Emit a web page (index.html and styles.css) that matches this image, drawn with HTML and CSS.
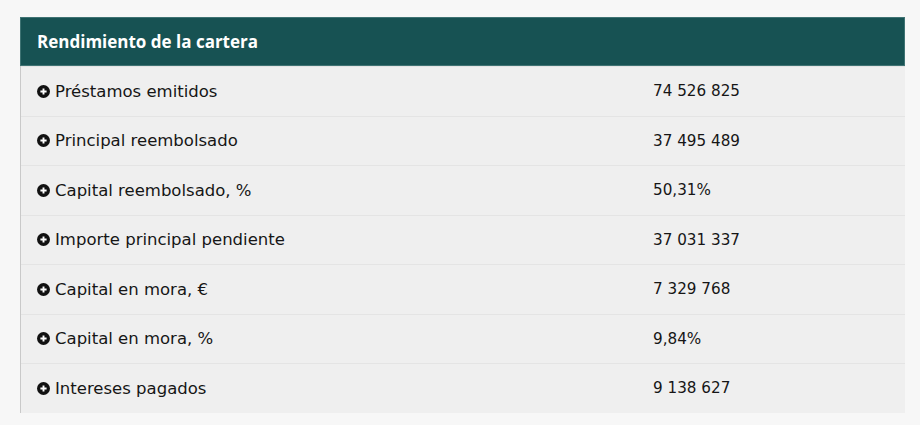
FILE: index.html
```html
<!DOCTYPE html>
<html lang="es">
<head>
<meta charset="utf-8">
<link rel="stylesheet" href="styles.css">
</head>
<body>
<div class="table">
  <div class="head">Rendimiento de la cartera</div>
  <div class="row"><div class="label"><span class="ic"><svg viewBox="0 0 13 13" width="13" height="13"><circle cx="6.5" cy="6.5" r="6.5" fill="#111"/><path d="M6.5 3.4v6.2M3.4 6.5h6.2" stroke="#fff" stroke-width="1.9"/></svg></span>Préstamos emitidos</div><div class="val">74 526 825</div></div>
  <div class="row"><div class="label"><span class="ic"><svg viewBox="0 0 13 13" width="13" height="13"><circle cx="6.5" cy="6.5" r="6.5" fill="#111"/><path d="M6.5 3.4v6.2M3.4 6.5h6.2" stroke="#fff" stroke-width="1.9"/></svg></span>Principal reembolsado</div><div class="val">37 495 489</div></div>
  <div class="row"><div class="label"><span class="ic"><svg viewBox="0 0 13 13" width="13" height="13"><circle cx="6.5" cy="6.5" r="6.5" fill="#111"/><path d="M6.5 3.4v6.2M3.4 6.5h6.2" stroke="#fff" stroke-width="1.9"/></svg></span>Capital reembolsado, %</div><div class="val">50,31%</div></div>
  <div class="row"><div class="label"><span class="ic"><svg viewBox="0 0 13 13" width="13" height="13"><circle cx="6.5" cy="6.5" r="6.5" fill="#111"/><path d="M6.5 3.4v6.2M3.4 6.5h6.2" stroke="#fff" stroke-width="1.9"/></svg></span>Importe principal pendiente</div><div class="val">37 031 337</div></div>
  <div class="row"><div class="label"><span class="ic"><svg viewBox="0 0 13 13" width="13" height="13"><circle cx="6.5" cy="6.5" r="6.5" fill="#111"/><path d="M6.5 3.4v6.2M3.4 6.5h6.2" stroke="#fff" stroke-width="1.9"/></svg></span>Capital en mora, €</div><div class="val">7 329 768</div></div>
  <div class="row"><div class="label"><span class="ic"><svg viewBox="0 0 13 13" width="13" height="13"><circle cx="6.5" cy="6.5" r="6.5" fill="#111"/><path d="M6.5 3.4v6.2M3.4 6.5h6.2" stroke="#fff" stroke-width="1.9"/></svg></span>Capital en mora, %</div><div class="val">9,84%</div></div>
  <div class="row"><div class="label"><span class="ic"><svg viewBox="0 0 13 13" width="13" height="13"><circle cx="6.5" cy="6.5" r="6.5" fill="#111"/><path d="M6.5 3.4v6.2M3.4 6.5h6.2" stroke="#fff" stroke-width="1.9"/></svg></span>Intereses pagados</div><div class="val">9 138 627</div></div>
</div>
</body>
</html>
```
FILE: styles.css
```css
html, body { margin: 0; padding: 0; }
body {
  background: #f7f7f7;
  font-family: "DejaVu Sans", sans-serif;
  color: #161616;
  padding: 17px 15px 0 20px;
  height: 425px;
  box-sizing: border-box;
}
.table {
  width: 885px;
  border-left: 1px solid #c9c9c9;
  box-sizing: border-box;
}
.head {
  background: #175253;
  color: #fff;
  font-family: "Open Sans", sans-serif;
  font-weight: 700;
  font-size: 17px;
  height: 49px;
  line-height: 48px;
  padding-left: 16px;
  margin-left: -1px;
  border: 1px solid #3f7373;
  box-sizing: border-box;
}
.row {
  display: grid;
  grid-template-columns: 616px 1fr;
  background: #efefef;
  height: 49.5px;
  align-items: center;
  border-top: 1px solid #e4e4e4;
  box-sizing: border-box;
  font-size: 16.5px;
}
.row:first-of-type { border-top: 0; }
.label { padding-left: 16px; display: flex; align-items: center; }
.ic { width: 13px; height: 13px; margin-right: 5px; display: flex; }
.val { padding-left: 16px; font-size: 15.2px; }
```
